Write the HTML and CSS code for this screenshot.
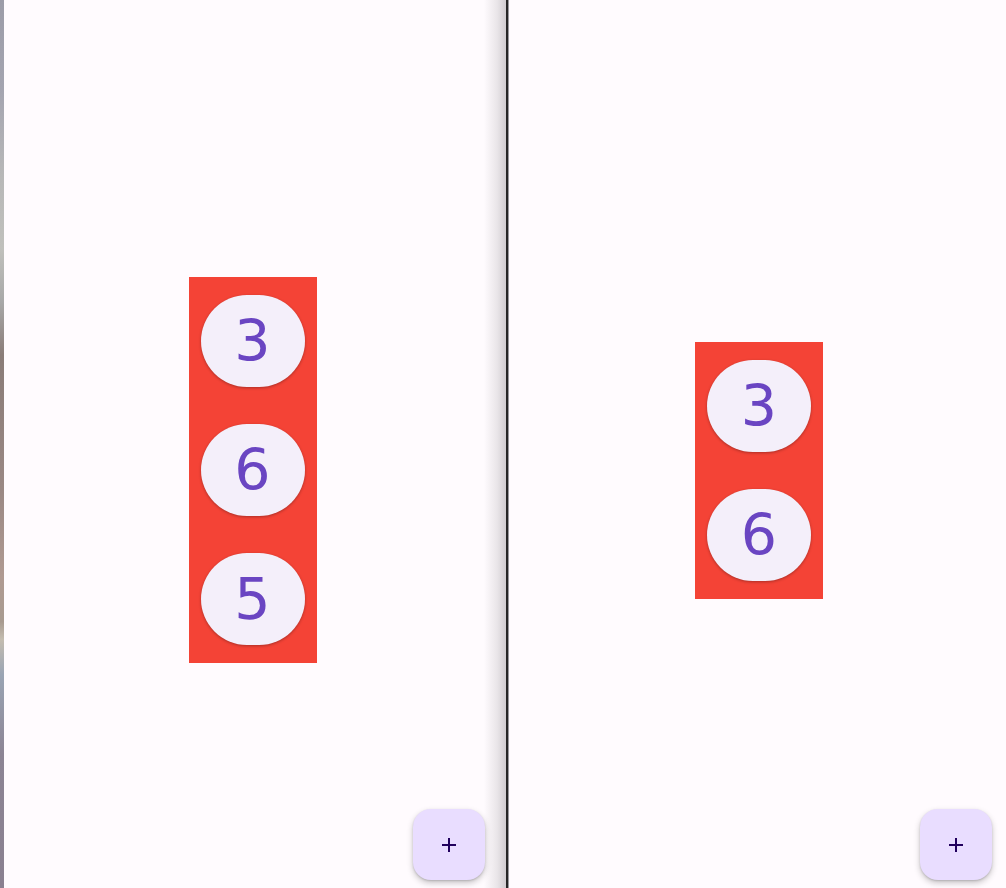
FILE: index.html
```html
<!DOCTYPE html>
<html lang="en">
<head>
    <meta charset="UTF-8">
    <meta name="viewport" content="width=device-width, initial-scale=1.0">
    <title>Split screen chips</title>
    <link rel="stylesheet" href="styles.css">
</head>
<body>
    <div class="wallpaper"></div>

    <div class="pane pane-left">
        <div class="stack">
            <div class="chip">3</div>
            <div class="chip">6</div>
            <div class="chip">5</div>
        </div>
        <button class="fab" aria-label="Add">
            <svg width="16" height="16" viewBox="0 0 16 16">
                <path d="M8 1v14M1 8h14" stroke="#21005d" stroke-width="2" fill="none"/>
            </svg>
        </button>
    </div>

    <div class="divider"></div>

    <div class="pane pane-right">
        <div class="stack">
            <div class="chip">3</div>
            <div class="chip">6</div>
        </div>
        <button class="fab" aria-label="Add">
            <svg width="16" height="16" viewBox="0 0 16 16">
                <path d="M8 1v14M1 8h14" stroke="#21005d" stroke-width="2" fill="none"/>
            </svg>
        </button>
    </div>
</body>
</html>
```

FILE: styles.css
```css
* {
    margin: 0;
    padding: 0;
    box-sizing: border-box;
}

body {
    display: flex;
    height: 888px;
    overflow: hidden;
    background: #fffbfe;
    font-family: Roboto, 'Noto Sans', sans-serif;
}

.wallpaper {
    width: 4px;
    flex-shrink: 0;
    background: linear-gradient(180deg,
        #9c9ca8 0%, #a4a4b0 10%, #b8b8b8 20%, #c0c0bc 28%,
        #a8a8a8 34%, #8a7c78 40%, #9a8884 55%, #b09a92 65%,
        #a89a90 70%, #c4bcb0 72%, #9aa4b4 76%, #8c8494 85%, #8a8090 100%);
}

.pane {
    position: relative;
    display: flex;
    align-items: center;
    justify-content: center;
    padding-top: 52px;
    background: #fffbfe;
}

.pane-left {
    width: 502px;
    flex-shrink: 0;
    padding-right: 5px;
}

/* window edge shading next to the divider */
.pane-left::after {
    content: '';
    position: absolute;
    top: 0;
    right: 0;
    bottom: 0;
    width: 22px;
    background: linear-gradient(90deg, rgba(200, 196, 200, 0) 0%, rgba(200, 196, 200, 0.4) 60%, rgba(196, 192, 196, 0.8) 100%);
    pointer-events: none;
}

.pane-right {
    flex: 1;
    padding-left: 3px;
}

.divider {
    width: 3px;
    flex-shrink: 0;
    background: linear-gradient(90deg, #262626 0, #262626 2px, #9a9a9e 2px);
}

.stack {
    display: flex;
    flex-direction: column;
    gap: 37px;
    padding: 18px 12px;
    background: #f44336;
}

.chip {
    width: 104px;
    height: 92px;
    border-radius: 46px;
    background: #f4effa;
    box-shadow: 0 1px 3px rgba(0, 0, 0, 0.3);
    color: #6a45c2;
    font-family: 'DejaVu Sans', sans-serif;
    font-size: 57px;
    line-height: 92px;
    text-align: center;
}

.fab {
    position: absolute;
    bottom: 8px;
    width: 72px;
    height: 71px;
    border: none;
    border-radius: 18px;
    background: #e9ddff;
    box-shadow: 0 3px 6px rgba(0, 0, 0, 0.22), 0 1px 2px rgba(0, 0, 0, 0.15);
    display: flex;
    align-items: center;
    justify-content: center;
    z-index: 1;
}

.pane-left .fab {
    right: 21px;
}

.pane-right .fab {
    right: 14px;
}
```
